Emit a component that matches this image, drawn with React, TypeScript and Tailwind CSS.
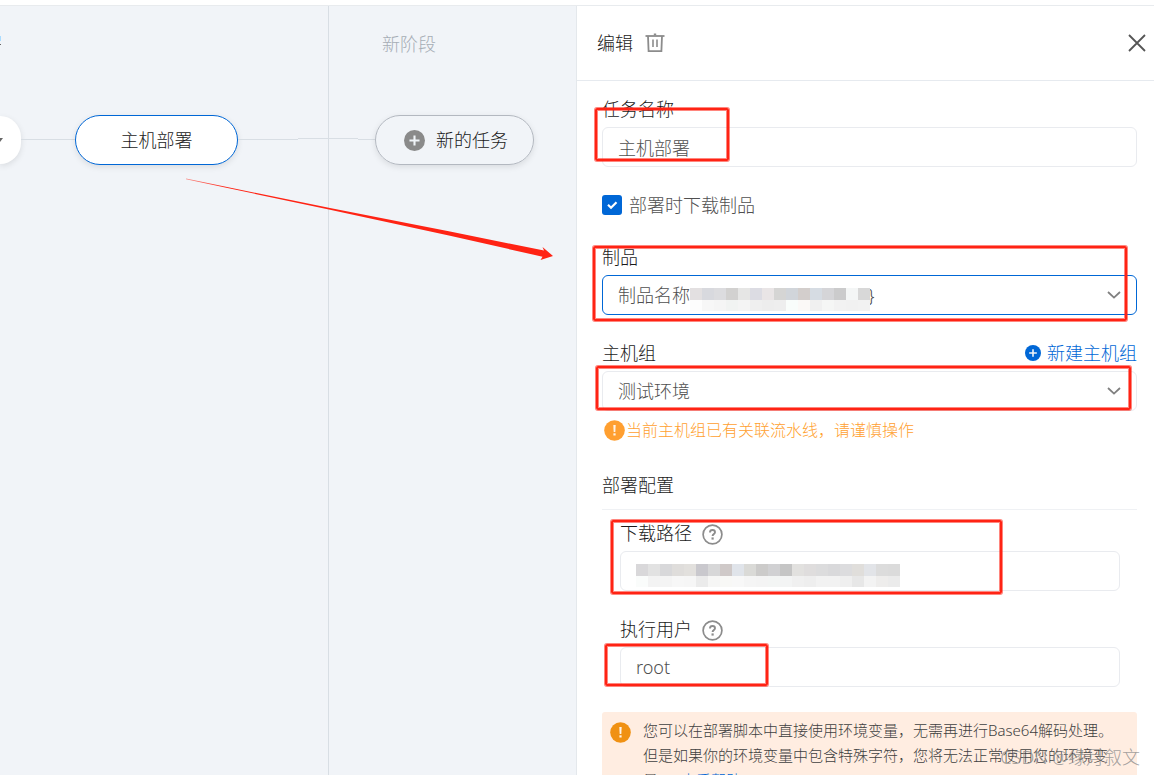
import React from "react";

function Mark({ className }: { className: string }) {
  return (
    <div aria-hidden="true" className={"pointer-events-none absolute z-10 p-px " + className}>
      <div className="h-full rounded-[2px] border-2 border-[#ff2314] shadow-[0_0_0_1px_rgba(255,35,20,0.55),inset_0_0_0_1px_rgba(255,35,20,0.55)]" />
    </div>
  );
}

function PlusDot({ size }: { size: number }) {
  return (
    <svg width={size} height={size} viewBox="0 0 20 20" aria-hidden="true" className="shrink-0">
      <circle cx="10" cy="10" r="10" fill="currentColor" />
      <path d="M10 5.2v9.6M5.2 10h9.6" stroke="#f0f4f8" strokeWidth="2" />
    </svg>
  );
}

function AlertDot() {
  return (
    <svg width="21" height="21" viewBox="0 0 21 21" aria-hidden="true" className="shrink-0">
      <circle cx="10.5" cy="10.5" r="10.3" fill="currentColor" />
      <path d="M9.3 5h2.4l-.4 7h-1.6z" fill="#fff3e6" />
      <rect x="9.4" y="13.3" width="2.2" height="2.2" fill="#fff3e6" />
    </svg>
  );
}

function Help() {
  return (
    <button type="button" aria-label="帮助" className="text-[#8c8c8c]">
      <svg width="21" height="21" viewBox="0 0 21 21" fill="none" stroke="currentColor" aria-hidden="true">
        <circle cx="10.5" cy="10.5" r="9.4" strokeWidth="1.7" />
        <path d="M8 8.4c0-1.5 1-2.4 2.5-2.4S13 6.9 13 8.2c0 1.7-2.4 1.8-2.4 3.8" strokeWidth="1.9" />
        <path d="M10.6 13.4v2.2" strokeWidth="2.2" />
      </svg>
    </button>
  );
}

function Chevron() {
  return (
    <svg
      width="14"
      height="8"
      viewBox="0 0 14 8"
      fill="none"
      stroke="#808080"
      strokeWidth="1.8"
      aria-hidden="true"
      className="pointer-events-none absolute top-4 right-4"
    >
      <path d="M1 1l6 5.6L13 1" />
    </svg>
  );
}

function Mosaic({ rows, className }: { rows: string[][]; className: string }) {
  return (
    <div aria-hidden="true" className={"pointer-events-none absolute " + className}>
      {rows.map((row, r) => (
        <div key={r} className="flex">
          {row.map((color, i) => (
            <span key={i} className={r === 0 ? "h-3 w-3" : "h-[11px] w-3"} style={{ backgroundColor: color }} />
          ))}
        </div>
      ))}
    </div>
  );
}

const productMosaic = [
  ["#e3e0e1", "#d8d9de", "#dcdcdf", "#d2d1d0", "#e6e6e5", "#dcdce3", "#e9e5e6", "#d5d5d4", "#d1d5da", "#d3cecc", "#d6dce3", "#d5d5d8", "#cbcbcc", "#f4f6f6", "#d8d8d8"],
  ["#fdfdfd", "#f7f7f7", "#f5f5f5", "#f1f3f2", "#f4f4f4", "#efefef", "#ededed", "#eeeeee", "#f9fdfb", "#fbf9f7", "#f0f0f0", "#f5f6f5", "#f2f2f2", "#f1f1f1", "#f2f2f2"],
];

const pathMosaic = [
  ["#d9d8da", "#e2e2e2", "#d8d8da", "#dfdddb", "#e2e0dd", "#c9c8cd", "#d7d7d8", "#cfc9c8", "#e0e4ea", "#dadad7", "#cccbca", "#d1d1d3", "#c5c5c5", "#e2e1df", "#dfdddd", "#dcdcdd", "#d9d9db", "#dcdcde", "#e0dedb", "#e2e4e8", "#dcdcdc", "#dbdbdb"],
  ["#fafcfb", "#f3f3f3", "#f4f4f4", "#f7f7f7", "#f6f6f6", "#ebebeb", "#f6f6f5", "#f8f8f6", "#f8f8f8", "#f5f5f5", "#f4f4f4", "#f3f5f4", "#f3f4f4", "#f0f0f0", "#eeeeee", "#f2f2f2", "#f2f2f2", "#efefef", "#e7e7e7", "#f3f3f3", "#eeedec", "#ebebeb"],
];

const labelClass = "mb-0.5 flex h-8 items-center text-lg text-[#1a1a1a]";
const fieldClass =
  "block h-10 w-full appearance-none rounded-md border border-[#e9ebef] bg-white px-[15px] text-lg text-[#505050] outline-none";

function Canvas() {
  return (
    <main className="relative flex min-w-0 flex-1 overflow-hidden bg-[#f1f4f8]">
      <section aria-label="部署" className="w-[329px] shrink-0 border-r border-[#d8dee4]">
        <div className="flex h-[109px] flex-col gap-[3px] pt-[30px]">
          <span className="h-[5px] w-px bg-[#abdcff]" />
          <span className="h-px w-px bg-[#666]" />
        </div>
        <div className="flex h-[50px] items-center">
          <button
            type="button"
            aria-label="展开"
            className="flex h-12 w-[21px] items-center rounded-r-full bg-white shadow-[0_2px_6px_rgba(0,0,0,0.1)]"
          >
            <svg width="3" height="4" viewBox="0 0 3 4" aria-hidden="true">
              <path d="M0 0h3L0 4z" fill="#666" />
            </svg>
          </button>
          <span className="mb-0.5 h-px w-[54px] bg-[#d8dee4]" />
          <button
            type="button"
            className="h-[50px] w-[163px] rounded-full border border-[#0067d6] bg-white text-lg text-[#1a1a1a] shadow-[0_2px_6px_rgba(0,0,0,0.1)]"
          >
            主机部署
          </button>
          <span className="mb-0.5 h-px w-[60px] bg-[#d8dee4]" />
          <span className="mb-1 h-px flex-1 bg-[#d8dee4]" />
        </div>
      </section>
      <section aria-label="新阶段" className="min-w-0 flex-1">
        <h2 className="flex h-[109px] items-start pt-6 pl-[53px] text-lg leading-7 text-[#a6adb5]">新阶段</h2>
        <div className="flex h-[50px] items-center">
          <span className="mb-1 h-px w-[29px] bg-[#d8dee4]" />
          <span className="mb-0.5 h-px w-[17px] bg-[#d8dee4]" />
          <button
            type="button"
            className="flex h-[50px] w-[159px] shrink-0 items-center gap-[11px] rounded-full border border-[#b3b8c0] pl-7 text-lg text-[#1a1a1a] shadow-[0_2px_6px_rgba(0,0,0,0.1)]"
          >
            <span className="text-[#8a8a8a]">
              <PlusDot size={21} />
            </span>
            新的任务
          </button>
        </div>
      </section>
      <svg
        width="370"
        height="84"
        viewBox="185 177 370 84"
        aria-hidden="true"
        className="pointer-events-none absolute top-[171px] left-[185px]"
      >
        <defs>
          <linearGradient id="tail" gradientUnits="userSpaceOnUse" x1="186" y1="179" x2="225" y2="188">
            <stop offset="0" stopColor="#ff2314" stopOpacity="0.5" />
            <stop offset="1" stopColor="#ff2314" />
          </linearGradient>
        </defs>
        <path
          d="M186 178.6L330 208L450 231.5L544 250.5L542.5 247L553 256L540.5 260L542.5 256.7L450 235.8L330 209.8L186 179.2Z"
          fill="url(#tail)"
        />
      </svg>
    </main>
  );
}

function Panel() {
  return (
    <aside className="flex w-[578px] shrink-0 flex-col overflow-hidden border-l border-[#e4e8ec] bg-white">
      <header className="flex h-[75px] shrink-0 items-center border-b border-[#e6eaef] pr-2 pl-5">
        <h1 className="text-lg text-[#1a1a1a]">编辑</h1>
        <button type="button" aria-label="删除" className="ml-3">
          <svg width="20" height="20" viewBox="0 0 20 20" fill="none" stroke="#8c8c8c" aria-hidden="true">
            <path d="M0.5 3h19" strokeWidth="1.8" />
            <path d="M10 0.5v2" strokeWidth="2.4" />
            <path d="M3 3l.6 15.200h12.800L17 3" strokeWidth="1.8" />
            <path d="M8 6.500v7.500M12 6.500v7.500" strokeWidth="1.6" />
          </svg>
        </button>
        <button type="button" aria-label="关闭" className="ml-auto">
          <svg width="18" height="18" viewBox="0 0 18 18" stroke="#555" strokeWidth="1.8" aria-hidden="true">
            <path d="M1 1l16 16M17 1L1 17" />
          </svg>
        </button>
      </header>
      <form className="flex flex-col pt-3 pr-[17px] pl-[25px]">
        <div className="relative">
          <label htmlFor="task" className={labelClass}>
            任务名称
          </label>
          <input id="task" defaultValue="主机部署" className={fieldClass} />
          <Mark className="top-[14px] -left-2 h-[55px] w-[136px]" />
        </div>

        <label className="mt-[26px] mb-6 flex h-6 items-center gap-[7px] text-lg text-[#505050]">
          <span className="relative flex">
            <input type="checkbox" defaultChecked className="h-5 w-5 appearance-none rounded-[3px] checked:bg-[#0067d6]" />
            <svg
              width="20"
              height="20"
              viewBox="0 0 20 20"
              fill="none"
              stroke="#fff"
              strokeWidth="2.2"
              aria-hidden="true"
              className="pointer-events-none absolute inset-0"
            >
              <path d="M6 9.800l3 2.900L14.500 7.300" />
            </svg>
          </span>
          部署时下载制品
        </label>

        <div className="relative">
          <label htmlFor="product" className={labelClass}>
            制品
          </label>
          <div className="relative">
            <select id="product" className={fieldClass + " !border-[#0067d6]"}>
              <option>制品名称</option>
            </select>
            <span className="pointer-events-none absolute top-1.5 left-[266px] text-lg leading-7 text-[#505050]">{"}"}</span>
            <Mosaic rows={productMosaic} className="top-[13px] left-[88px]" />
            <Chevron />
          </div>
          <Mark className="top-1 right-[9px] -left-2.5 h-[77px]" />
        </div>

        <div className="relative mt-[22px]">
          <div className="flex items-center justify-between">
            <label htmlFor="hosts" className={labelClass}>
              主机组
            </label>
            <a href="#new-group" className="mb-0.5 flex items-center gap-1.5 text-lg text-[#0067d6]">
              <PlusDot size={16} />
              新建主机组
            </a>
          </div>
          <div className="relative">
            <select id="hosts" className={fieldClass}>
              <option>测试环境</option>
            </select>
            <Chevron />
          </div>
          <Mark className="top-7 right-[5px] -left-[7px] h-[46px]" />
        </div>
        <p className="flex h-[38px] items-center gap-px pl-0.5 text-base text-[#ff9f30]">
          <AlertDot />
          当前主机组已有关联流水线，请谨慎操作
        </p>

        <h2 className="mt-5 flex h-[41px] items-start border-b border-[#eff1f4] text-lg leading-8 text-[#1a1a1a]">
          部署配置
        </h2>

        <div className="mt-[7px] flex flex-col gap-[22px] pr-[17px] pl-[18px]">
          <div className="relative">
            <div className="flex items-center gap-2.5">
              <label htmlFor="path" className={labelClass}>
                下载路径
              </label>
              <Help />
            </div>
            <div className="relative">
              <input id="path" className={fieldClass} />
              <Mosaic rows={pathMosaic} className="top-[13px] left-4" />
            </div>
            <Mark className="top-0.5 -left-2.5 h-[76px] w-[393px]" />
          </div>
          <div className="relative">
            <div className="flex items-center gap-2.5">
              <label htmlFor="user" className={labelClass}>
                执行用户
              </label>
              <Help />
            </div>
            <input id="user" defaultValue="root" className={fieldClass} />
            <Mark className="top-[30px] -left-4 h-[44px] w-[165px]" />
          </div>
        </div>

        <div className="mt-[25px] flex gap-3 rounded-[3px] bg-[#ffede1] px-2 py-1.5 text-[15px] leading-[25px] text-[#404040]">
          <span className="pt-1 text-[#f09113]">
            <AlertDot />
          </span>
          <p>
            您可以在部署脚本中直接使用环境变量，无需再进行Base64解码处理。
            <br />
            但是如果你的环境变量中包含特殊字符，您将无法正常使用您的环境变
            <br />
            量。
            <a href="#help" className="ml-2 text-[#0067d6]">
              查看帮助
            </a>
          </p>
        </div>
      </form>
    </aside>
  );
}

export default function App() {
  return (
    <div className="relative flex h-screen flex-col overflow-hidden bg-white font-['Noto_Sans','Noto_Sans_CJK_SC',sans-serif] font-light">
      <div className="h-1.5 shrink-0 border-b border-[#e8ebee]" />
      <div className="flex min-h-0 flex-1">
        <Canvas />
        <Panel />
      </div>
      <span className="pointer-events-none absolute right-3.5 bottom-1.5 text-lg leading-6 text-[#8c8c8c]/80">
        CSDN @缘月叙文
      </span>
    </div>
  );
}
